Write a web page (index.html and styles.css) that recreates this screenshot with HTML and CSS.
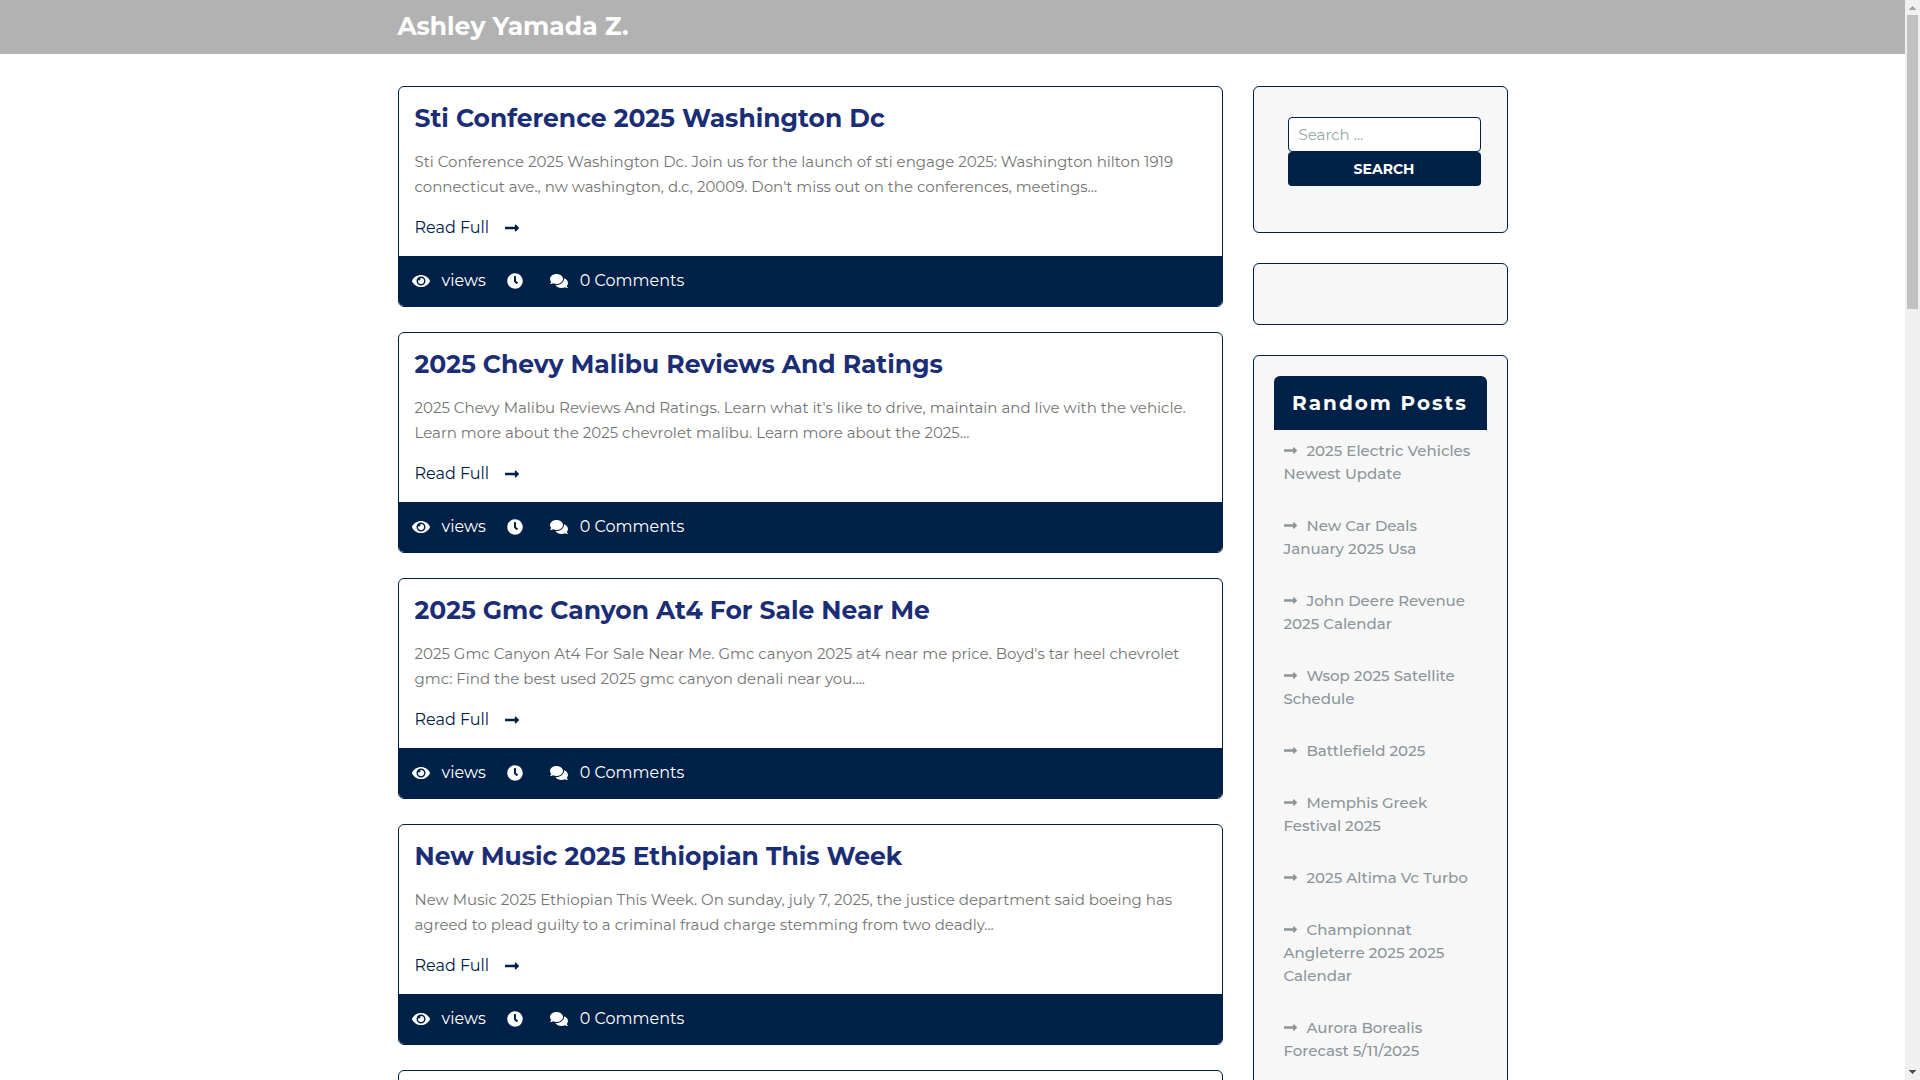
FILE: index.html
```html
<!DOCTYPE html>
<html lang="en">
<head>
    <meta charset="UTF-8">
    <meta name="viewport" content="width=device-width, initial-scale=1.0">
    <title>Ashley Yamada Z.</title>
    <link rel="stylesheet" href="styles.css">
</head>
<body>
    <!-- shared icons -->
    <svg class="sprite" aria-hidden="true">
        <symbol id="arrow" viewBox="0 0 448 512"><path d="M313.941 216H12c-6.627 0-12 5.373-12 12v56c0 6.627 5.373 12 12 12h301.941v46.059c0 21.382 25.851 32.09 40.971 16.971l86.059-86.059c9.373-9.373 9.373-24.569 0-33.941l-86.059-86.059c-15.119-15.119-40.971-4.411-40.971 16.971V216z"/></symbol>
        <symbol id="clock" viewBox="0 0 512 512"><path d="M256,8C119,8,8,119,8,256S119,504,256,504,504,393,504,256,393,8,256,8Zm92.49,313h0l-20,25a16,16,0,0,1-22.49,2.5h0l-67-49.72a40,40,0,0,1-15-31.23V112a16,16,0,0,1,16-16h32a16,16,0,0,1,16,16V256l58,42.5A16,16,0,0,1,348.49,321Z"/></symbol>
        <symbol id="eye" viewBox="0 0 576 512"><path d="M572.52 241.4C518.29 135.59 410.93 64 288 64S57.68 135.64 3.48 241.41a32.35 32.35 0 0 0 0 29.19C57.71 376.41 165.07 448 288 448s230.32-71.64 284.52-177.41a32.35 32.35 0 0 0 0-29.19zM288 400a144 144 0 1 1 144-144 143.93 143.93 0 0 1-144 144zm0-240a95.31 95.31 0 0 0-25.31 3.79 47.85 47.85 0 0 1-66.9 66.9A95.78 95.78 0 1 0 288 160z"/></symbol>
        <symbol id="comments" viewBox="0 0 576 512"><path d="M416 192c0-88.4-93.1-160-208-160S0 103.6 0 192c0 34.3 14.1 65.9 38 92-13.4 30.2-35.5 54.2-35.8 54.5-2.2 2.3-2.8 5.7-1.5 8.7S4.8 352 8 352c36.6 0 66.9-12.3 88.7-25 32.2 15.7 70.3 25 111.3 25 114.9 0 208-71.6 208-160zm122 220c23.9-26 38-57.7 38-92 0-66.9-53.5-124.2-129.3-148.1.9 6.6 1.3 13.3 1.3 20.1 0 105.9-107.7 192-240 192-10.8 0-21.3-.8-31.7-1.9C207.8 439.6 281.8 480 368 480c41 0 79.1-9.2 111.3-25 21.8 12.7 52.1 25 88.7 25 3.2 0 6.1-1.9 7.3-4.8 1.3-2.9.7-6.3-1.5-8.7-.3-.3-22.4-24.2-35.8-54.5z"/></symbol>
    </svg>

    <div class="page">
        <header class="header">
            <div class="container">
                <a class="logo" href="#">Ashley Yamada Z.</a>
            </div>
        </header>

        <div class="container content">
            <main class="posts">
                <article class="post">
                    <div class="post-body">
                        <h2><a href="#">Sti Conference 2025 Washington Dc</a></h2>
                        <p>Sti Conference 2025 Washington Dc. Join us for the launch of sti engage 2025: Washington hilton 1919 connecticut ave., nw washington, d.c, 20009. Don't miss out on the conferences, meetings...</p>
                        <a class="read" href="#">Read Full <svg><use href="#arrow"/></svg></a>
                    </div>
                    <div class="post-meta">
                        <span class="views"><svg><use href="#eye"/></svg>views</span>
                        <span class="time"><svg><use href="#clock"/></svg></span>
                        <a href="#"><svg><use href="#comments"/></svg>0 Comments</a>
                    </div>
                </article>

                <article class="post">
                    <div class="post-body">
                        <h2><a href="#">2025 Chevy Malibu Reviews And Ratings</a></h2>
                        <p>2025 Chevy Malibu Reviews And Ratings. Learn what it's like to drive, maintain and live with the vehicle. Learn more about the 2025 chevrolet malibu. Learn more about the 2025...</p>
                        <a class="read" href="#">Read Full <svg><use href="#arrow"/></svg></a>
                    </div>
                    <div class="post-meta">
                        <span class="views"><svg><use href="#eye"/></svg>views</span>
                        <span class="time"><svg><use href="#clock"/></svg></span>
                        <a href="#"><svg><use href="#comments"/></svg>0 Comments</a>
                    </div>
                </article>

                <article class="post">
                    <div class="post-body">
                        <h2><a href="#">2025 Gmc Canyon At4 For Sale Near Me</a></h2>
                        <p>2025 Gmc Canyon At4 For Sale Near Me. Gmc canyon 2025 at4 near me price. Boyd's tar heel chevrolet gmc: Find the best used 2025 gmc canyon denali near you....</p>
                        <a class="read" href="#">Read Full <svg><use href="#arrow"/></svg></a>
                    </div>
                    <div class="post-meta">
                        <span class="views"><svg><use href="#eye"/></svg>views</span>
                        <span class="time"><svg><use href="#clock"/></svg></span>
                        <a href="#"><svg><use href="#comments"/></svg>0 Comments</a>
                    </div>
                </article>

                <article class="post">
                    <div class="post-body">
                        <h2><a href="#">New Music 2025 Ethiopian This Week</a></h2>
                        <p>New Music 2025 Ethiopian This Week. On sunday, july 7, 2025, the justice department said boeing has agreed to plead guilty to a criminal fraud charge stemming from two deadly...</p>
                        <a class="read" href="#">Read Full <svg><use href="#arrow"/></svg></a>
                    </div>
                    <div class="post-meta">
                        <span class="views"><svg><use href="#eye"/></svg>views</span>
                        <span class="time"><svg><use href="#clock"/></svg></span>
                        <a href="#"><svg><use href="#comments"/></svg>0 Comments</a>
                    </div>
                </article>

                <article class="post post-next"></article>
            </main>

            <aside class="sidebar">
                <section class="widget">
                    <form class="search">
                        <input type="search" placeholder="Search ..." aria-label="Search">
                        <button type="submit">Search</button>
                    </form>
                </section>

                <section class="widget"></section>

                <section class="widget">
                    <h3>Random Posts</h3>
                    <ul>
                        <li><a href="#"><svg><use href="#arrow"/></svg>2025 Electric Vehicles Newest Update</a></li>
                        <li><a href="#"><svg><use href="#arrow"/></svg>New Car Deals January 2025 Usa</a></li>
                        <li><a href="#"><svg><use href="#arrow"/></svg>John Deere Revenue 2025 Calendar</a></li>
                        <li><a href="#"><svg><use href="#arrow"/></svg>Wsop 2025 Satellite Schedule</a></li>
                        <li><a href="#"><svg><use href="#arrow"/></svg>Battlefield 2025</a></li>
                        <li><a href="#"><svg><use href="#arrow"/></svg>Memphis Greek Festival 2025</a></li>
                        <li><a href="#"><svg><use href="#arrow"/></svg>2025 Altima Vc Turbo</a></li>
                        <li><a href="#"><svg><use href="#arrow"/></svg>Championnat Angleterre 2025 2025 Calendar</a></li>
                        <li><a href="#"><svg><use href="#arrow"/></svg>Aurora Borealis Forecast 5/11/2025</a></li>
                    </ul>
                </section>
            </aside>
        </div>
    </div>

    <div class="scrollbar" aria-hidden="true">
        <svg class="up" viewBox="0 0 15 15" shape-rendering="crispEdges"><path d="M7 6h1v1h1v1h1v1h1v1H4V9h1V8h1V7h1z"/></svg>
        <div class="track"><div class="thumb"></div></div>
        <svg class="down" viewBox="0 0 15 15" shape-rendering="crispEdges"><path d="M4 5h7v1h-1v1H9v1H8v1H7V8H6V7H5V6H4z"/></svg>
    </div>
</body>
</html>
```
FILE: styles.css
```css
* {
    margin: 0;
    padding: 0;
    box-sizing: border-box;
}

body {
    display: flex;
    height: 100vh;
    overflow: hidden;
    font-family: Montserrat, Inter, sans-serif;
    font-size: 16px;
    line-height: 24px;
    color: #747474;
    background-color: #fff;
}

a {
    color: inherit;
    text-decoration: none;
}

svg {
    fill: currentColor;
    width: 18px;
    height: 16px;
}

.sprite {
    display: none;
}

.page {
    flex: 1;
    overflow: hidden;
}

.container {
    max-width: 1140px;
    margin: 0 auto;
    padding: 0 15px;
}

.header {
    background-color: #b2b2b2;
    padding: 8px 0 10px;
}

.logo {
    display: block;
    color: #fff;
    font-size: 25px;
    line-height: 36px;
    font-weight: 700;
}

.content {
    display: flex;
    align-items: flex-start;
    gap: 30px;
    padding-top: 32px;
}

.posts {
    flex: 1;
}

.post {
    border: 1px solid #002147;
    border-radius: 6px;
    margin-bottom: 25px;
    overflow: hidden;
}

.post-next {
    height: 221px;
}

.post-body {
    padding: 16px;
}

.post h2 {
    font-size: 25px;
    line-height: 30px;
    font-weight: 700;
    color: #1a2d75;
    margin-bottom: 16px;
}

.post p {
    font-size: 15px;
    line-height: 25px;
    margin-bottom: 17px;
}

.read {
    display: flex;
    align-items: center;
    gap: 16px;
    color: #002147;
}

.read svg {
    width: 14px;
}

.post-meta {
    display: flex;
    align-items: center;
    background-color: #002147;
    color: #fff;
    padding: 13px;
}

.post-meta span,
.post-meta a {
    display: flex;
    align-items: center;
    gap: 12px;
}

.post-meta .views {
    margin-right: 20px;
}

.post-meta .time {
    margin-right: 26px;
}

.sidebar {
    width: 255px;
}

.widget {
    background-color: #f7f7f7;
    border: 1px solid #002147;
    border-radius: 6px;
    padding: 20px;
    min-height: 62px;
    margin-bottom: 30px;
}

.search {
    display: flex;
    flex-direction: column;
    padding: 10px 6px 26px 14px;
}

.search input {
    width: 100%;
    height: 35px;
    padding: 0 10px;
    border: 1px solid #002147;
    border-radius: 4px;
    background-color: #fff;
    font-family: inherit;
    font-size: 15px;
}

.search input::placeholder {
    color: #95a5a6;
}

.search button {
    height: 34px;
    border: none;
    border-radius: 4px;
    background-color: #002147;
    color: #fff;
    font-family: inherit;
    font-size: 14px;
    font-weight: 700;
    text-transform: uppercase;
    cursor: pointer;
}

.widget h3 {
    background-color: #002147;
    border-radius: 6px 6px 0 0;
    color: #fff;
    font-size: 20px;
    line-height: 24px;
    letter-spacing: 2px;
    text-align: center;
    padding: 15px 0;
}

.widget ul {
    list-style: none;
}

.widget li {
    padding: 9px 10px 20px;
    font-size: 15px;
    line-height: 23px;
    font-weight: 500;
    color: #8b959c;
}

.widget li svg {
    width: 13px;
    height: 15px;
    margin-right: 10px;
    vertical-align: -2px;
}

.scrollbar {
    display: flex;
    flex-direction: column;
    width: 15px;
    background-color: #f0f0f0;
}

.scrollbar svg {
    width: 15px;
    height: 15px;
}

.scrollbar .up {
    color: #a3a3a3;
}

.scrollbar .down {
    color: #505050;
}

.track {
    flex: 1;
    padding: 0 2px;
}

.thumb {
    height: 28%;
    background-color: #c1c1c1;
}
```
